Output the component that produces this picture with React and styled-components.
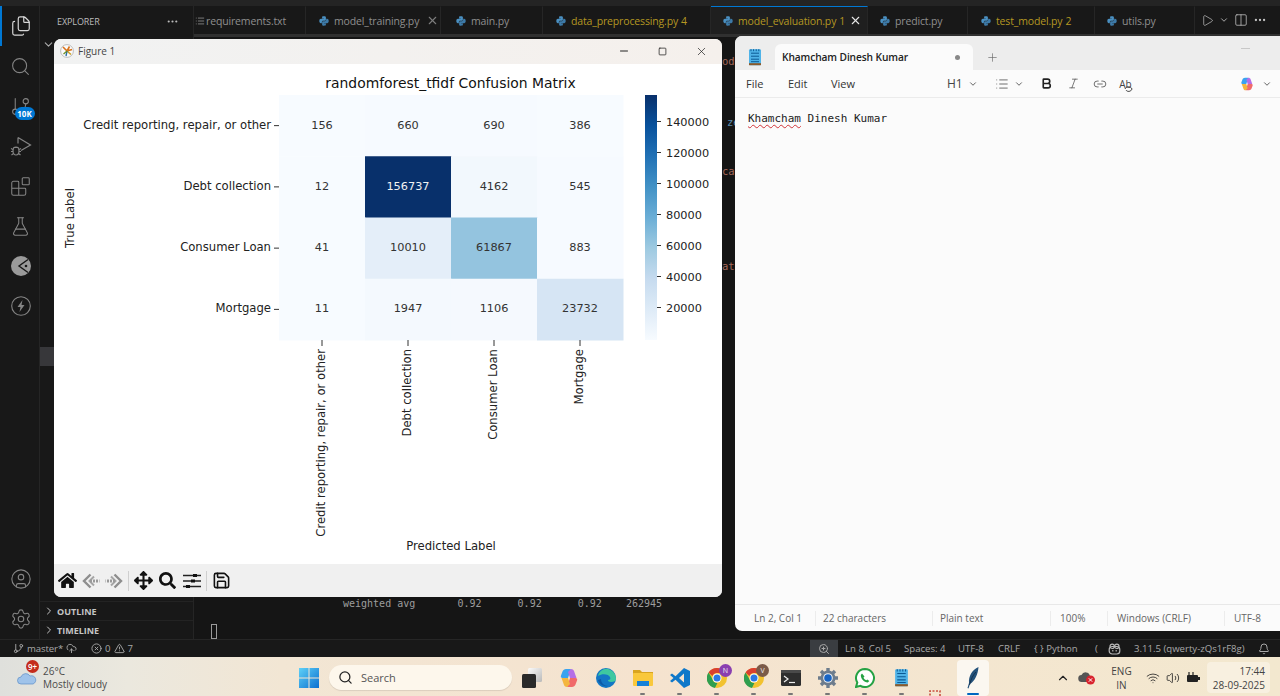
import React from 'react';
import styled, { createGlobalStyle } from 'styled-components';
import {
  Files, Search, Play, ChevronDown, ChevronRight, ChevronUp, Columns2, MoreHorizontal, X, Minus, Square,
  Plus, List, Bold, Italic, Link2, FlaskConical, CircleUser, Settings, GitBranch, CircleX, TriangleAlert,
  CloudUpload, ZoomIn, Bell, Wifi, Volume2, Save, Blocks,
} from 'lucide-react';
import { FaHome, FaSearch, FaArrowsAlt } from 'react-icons/fa';

const GlobalStyle = createGlobalStyle`
  html, body { margin: 0; padding: 0; height: 696px; overflow: hidden; background: #151515; }
  body { font-family: "Open Sans", "Liberation Sans", sans-serif; }
  * { box-sizing: border-box; }
`;

const Desktop = styled.div`
  position: relative;
  width: 1280px;
  height: 696px;
  display: flex;
  flex-direction: column;
  overflow: hidden;
`;

const Workbench = styled.div`
  flex: 1;
  display: flex;
  min-height: 0;
  border-top: 6px solid #242424;
`;

const ActivityBar = styled.nav`
  width: 40px;
  flex: none;
  background: #181818;
  border-right: 1px solid #252525;
  display: flex;
  flex-direction: column;
  align-items: center;
  color: #8b8b8b;
  position: relative;
`;

const ActivityIcon = styled.div`
  width: 40px;
  height: 40px;
  display: flex;
  align-items: center;
  justify-content: center;
  position: relative;
  color: ${p => (p.$active ? '#d7d7d7' : '#858585')};
  border-left: 2px solid ${p => (p.$active ? '#0078d4' : 'transparent')};
`;

const Badge = styled.span`
  position: absolute;
  left: 13px;
  top: 21px;
  width: 20px;
  height: 13px;
  border-radius: 7px;
  background: #0078d4;
  color: #fff;
  font-size: 8px;
  font-weight: 700;
  line-height: 13px;
  text-align: center;
`;

const ActivitySpacer = styled.div`
  flex: 1;
`;

const Sidebar = styled.aside`
  width: 154px;
  flex: none;
  background: #181818;
  border-right: 1px solid #252525;
  display: flex;
  flex-direction: column;
`;

const SidebarHead = styled.div`
  height: 28px;
  display: flex;
  align-items: center;
  justify-content: space-between;
  padding: 2px 14px 0 17px;
  color: #bbb;
  font-size: 9px;
  letter-spacing: -0.1px;
`;

const TreeChevron = styled.div`
  height: 20px;
  padding-left: 2px;
  color: #aaa;
  display: flex;
  align-items: center;
`;

const SelectedRow = styled.div`
  height: 19px;
  margin-top: 293px;
  background: #37373a;
`;

const SideSpacer = styled.div`
  flex: 1;
`;

const SectionRow = styled.div`
  height: 19px;
  display: flex;
  align-items: center;
  gap: 2px;
  padding-left: 3px;
  color: #c4c4c4;
  font-size: 9px;
  font-weight: 700;
  border-top: 1px solid #232323;
`;

const MainColumn = styled.div`
  flex: 1;
  min-width: 0;
  display: flex;
  flex-direction: column;
`;

const TabBar = styled.div`
  height: 31px;
  flex: none;
  display: flex;
  background: #181818;
  border-bottom: 3px solid #303030;
`;

const Tab = styled.div`
  width: ${p => p.$w}px;
  flex: none;
  display: flex;
  align-items: center;
  gap: ${p => p.$gap}px;
  padding-left: ${p => p.$pad}px;
  font-size: 10.5px;
  letter-spacing: -0.15px;
  white-space: nowrap;
  color: ${p => (p.$warn ? '#b49722' : '#8f8f8f')};
  background: ${p => (p.$active ? '#1f1f1f' : '#181818')};
  border-right: 1px solid #262626;
  border-top: 1px solid ${p => (p.$active ? '#0078d4' : 'transparent')};
`;

const TabCount = styled.span`
  margin: 0 -3px 0 -2px;
`;

const TabClose = styled(X)`
  margin-left: 2px;
  color: ${p => (p.$light ? '#e6e6e6' : '#7d7d7d')};
`;

const TabActions = styled.div`
  flex: 1;
  display: flex;
  align-items: center;
  gap: 5px;
  padding-left: 6px;
  color: #c4c4c4;
`;

const EditorPane = styled.div`
  flex: 1;
  min-height: 0;
  display: flex;
  flex-direction: column;
  background: #151515;
  font-family: "DejaVu Sans Mono", monospace;
  font-size: 10.5px;
  white-space: pre;
`;

const CodeLine = styled.div`
  height: 14px;
  line-height: 14px;
  margin-top: ${p => p.$top}px;
  padding-left: ${p => p.$left}px;
  color: ${p => p.$color};
`;

const TerminalLine = styled.div`
  margin-top: auto;
  height: 14px;
  line-height: 14px;
  padding-left: 149px;
  font-size: 10px;
  color: #9d9d9d;
`;

const TerminalCursor = styled.div`
  width: 6px;
  height: 15px;
  margin: 13px 0 0 17px;
  border: 1px solid #9a9a9a;
`;

const StatusBar = styled.footer`
  height: 18px;
  flex: none;
  display: flex;
  align-items: center;
  background: #181818;
  border-top: 1px solid #262626;
  color: #a8a8a8;
  font-size: 9.6px;
  white-space: nowrap;
`;

const StatusLeft = styled.div`
  flex: 1;
  display: flex;
  align-items: center;
  gap: 3px;
  padding-left: 13px;
  letter-spacing: -0.1px;
`;

const StatusGap = styled.span`
  width: 8px;
`;

const ZoomBox = styled.div`
  width: 28px;
  height: 17px;
  background: #3a3d41;
  display: flex;
  align-items: center;
  justify-content: center;
  margin-right: 7px;
`;

const StatusItem = styled.span`
  display: flex;
  align-items: center;
  gap: 4px;
  width: ${p => p.$w}px;
`;

const Taskbar = styled.div`
  height: 39px;
  flex: none;
  display: flex;
  align-items: center;
  padding-top: 2px;
  background: linear-gradient(90deg, #dfe0dc 0%, #ebe8de 10%, #f2e6d4 22%, #f5e3cf 50%, #f4e6d0 75%, #f3e8cf 100%);
  color: #333;
  position: relative;
`;

const Weather = styled.div`
  width: 290px;
  flex: none;
  display: flex;
  align-items: center;
  gap: 6px;
  padding-left: 17px;
  position: relative;
`;

const WeatherBadge = styled.span`
  position: absolute;
  left: 26px;
  top: -5px;
  width: 13px;
  height: 13px;
  border-radius: 50%;
  background: #c42b1c;
  color: #fff;
  font-size: 8px;
  font-weight: 600;
  line-height: 13px;
  text-align: center;
`;

const WeatherText = styled.div`
  font-size: 10px;
  line-height: 13px;
  color: #4b4b4b;
`;

const TaskSlot = styled.div`
  width: ${p => p.$w || 37}px;
  height: 36px;
  flex: none;
  display: flex;
  align-items: center;
  justify-content: center;
  position: relative;
  ${p => p.$active && 'background: #fbf7f0; border-radius: 4px;'}
  ${p => p.$open && `
    &::after {
      content: '';
      position: absolute;
      bottom: 1px;
      left: 50%;
      width: ${p.$active ? 12 : 5}px;
      height: 2px;
      margin-left: ${p.$active ? -6 : -2.5}px;
      border-radius: 1px;
      background: ${p.$active ? '#0067c0' : '#777'};
    }
  `}
`;

const ClippedIcon = styled.div`
  position: absolute;
  left: 9px;
  top: 30px;
  line-height: 0;
`;

const SearchBox = styled.div`
  width: 183px;
  height: 25px;
  margin: 0 1px 0 2px;
  flex: none;
  display: flex;
  align-items: center;
  gap: 8px;
  padding-left: 9px;
  border-radius: 13px;
  background: #fdf7ec;
  box-shadow: 0 1px 1px rgba(0, 0, 0, 0.1);
  color: #555;
  font-size: 11px;
`;

const SmallBadge = styled.span`
  position: absolute;
  right: 3px;
  top: 4px;
  width: 13px;
  height: 13px;
  border-radius: 50%;
  background: ${p => p.$color};
  color: #eee;
  font-size: 7px;
  line-height: 13px;
  text-align: center;
`;

const Tray = styled.div`
  flex: 1;
  display: flex;
  align-items: center;
  padding-left: 65px;
  color: #222;
`;

const TrayIcon = styled.div`
  width: ${p => p.$w}px;
  display: flex;
  justify-content: center;
  flex: none;
`;

const Lang = styled.div`
  width: 33px;
  margin: 0 5px 0 3px;
  text-align: center;
  font-size: 10px;
  line-height: 14px;
  color: #444;
`;

const Clock = styled.div`
  width: 63px;
  height: 31px;
  margin-left: 6px;
  padding: 2px 5px 0 0;
  text-align: right;
  background: #f8f0e0;
  border-radius: 4px;
  font-size: 10px;
  line-height: 14px;
  color: #444;
`;

const FigureWindow = styled.section`
  position: absolute;
  left: 54px;
  top: 39px;
  width: 668px;
  height: 558px;
  display: flex;
  flex-direction: column;
  background: #fff;
  border-radius: 7px;
  overflow: hidden;
`;

const FigureTitle = styled.div`
  height: 25px;
  flex: none;
  display: flex;
  align-items: center;
  gap: 4px;
  padding: 0 1px 1px 6px;
  background: linear-gradient(90deg, #f1f2f2, #f5f0ec);
  color: #444;
  font-size: 10px;
`;

const WindowButtons = styled.div`
  margin-left: auto;
  display: flex;
  align-items: center;
  color: #222;
`;

const WindowButton = styled.div`
  width: 39px;
  display: flex;
  justify-content: center;
`;

const Canvas = styled.svg`
  flex: 1;
  display: block;
  min-height: 0;
  font-family: "DejaVu Sans", sans-serif;
`;

const FigureToolbar = styled.div`
  height: 33px;
  flex: none;
  display: flex;
  align-items: center;
  padding-left: 2px;
  background: #f0f0f0;
  color: #111;
`;

const ToolButton = styled.div`
  width: ${p => p.$w || 23}px;
  display: flex;
  justify-content: center;
`;

const ToolSep = styled.div`
  width: 1px;
  height: 20px;
  margin: 0 ${p => p.$gap || 5}px;
  background: #cfcfcf;
`;

const NotepadWindow = styled.section`
  position: absolute;
  left: 735px;
  top: 36px;
  width: 545px;
  height: 595px;
  display: flex;
  flex-direction: column;
  background: #fbfbfb;
  border-radius: 7px 0 0 7px;
  overflow: hidden;
`;

const NotepadTabs = styled.div`
  height: 34px;
  flex: none;
  display: flex;
  align-items: flex-end;
  background: #ededed;
  padding-left: 12px;
`;

const NoteIconSlot = styled.div`
  width: 28px;
  height: 26px;
  flex: none;
  display: flex;
  align-items: center;
`;

const NoteTab = styled.div`
  width: 198px;
  height: 26px;
  display: flex;
  align-items: center;
  justify-content: space-between;
  padding: 0 13px 0 7px;
  background: #fbfbfb;
  border-radius: 6px 6px 0 0;
  color: #222;
  font-size: 10.2px;
  font-weight: 600;
  letter-spacing: -0.1px;
`;

const UnsavedDot = styled.span`
  width: 5px;
  height: 5px;
  border-radius: 50%;
  background: #888;
`;

const NewTab = styled.div`
  height: 26px;
  width: 38px;
  display: flex;
  align-items: center;
  justify-content: center;
  color: #666;
`;

const Minimize = styled.div`
  margin: 0 30px 21px auto;
  width: 9px;
  height: 1px;
  background: #c8c8c8;
`;

const NoteMenu = styled.div`
  height: 28px;
  flex: none;
  display: flex;
  align-items: center;
  padding-left: 11px;
  border-bottom: 1px solid #ebebeb;
  color: #333;
  font-size: 11px;
  position: relative;
`;

const MenuItem = styled.span`
  width: ${p => p.$w}px;
  flex: none;
`;

const NoteTool = styled.div`
  width: ${p => p.$w}px;
  flex: none;
  display: flex;
  align-items: center;
  justify-content: ${p => p.$align || 'center'};
  gap: 5px;
  color: #444;
`;

const HeadingLabel = styled.span`
  font-size: 12px;
`;

const RewriteLabel = styled.span`
  font-size: 10px;
  position: relative;
  line-height: 12px;
`;

const RewriteSwirl = styled.svg`
  position: absolute;
  left: 5px;
  top: 6px;
`;

const NoteBody = styled.div`
  flex: 1;
  padding: 14px 13px;
  font-family: "DejaVu Sans Mono", monospace;
  font-size: 11px;
  line-height: 14px;
  color: #222;
  white-space: pre;
`;

const Misspelled = styled.span`
  text-decoration: underline wavy #d13438 1px;
  text-underline-offset: 2px;
`;

const NoteStatus = styled.div`
  height: 27px;
  flex: none;
  display: flex;
  align-items: center;
  border-top: 1px solid #e8e8e8;
  color: #666;
  font-size: 10px;
`;

const NoteCell = styled.div`
  width: ${p => p.$w}px;
  height: 15px;
  line-height: 15px;
  flex: none;
  padding-left: ${p => p.$pad || 7}px;
  border-left: ${p => (p.$first ? 'none' : '1px solid #ececec')};
`;

// python logo used on the editor tabs
const PyIcon = () => (
  <svg width="10" height="10" viewBox="0 0 16 16">
    <path d="M5 1.500C5 .8 6 .5 8 .5s3 .5 3 1.500v4c0 1-.7 1.700-1.700 1.700H6.700C5.500 7.700 4.500 8.700 4.500 10v1.500H3c-1.500 0-2.500-1.300-2.500-3.500S1.500 4.500 3 4.500h5V4H5z" fill="#4a90c2" />
    <path d="M11 14.500c0 .7-1 1-3 1s-3-.5-3-1.500v-4c0-1 .7-1.700 1.700-1.700h2.600c1.200 0 2.200-1 2.200-2.300V4.500H13c1.500 0 2.500 1.300 2.500 3.500s-1 3.500-2.500 3.500H8v.5h3z" fill="#3d7aa8" />
  </svg>
);

const DebugIcon = () => (
  <svg width="22" height="22" viewBox="0 0 22 22" fill="none" stroke="currentColor" strokeWidth="1.200">
    <path d="M8 2.500v6M8 2.500 20.500 10 11 15.500" />
    <ellipse cx="6" cy="16" rx="3" ry="4" />
    <path d="M1 13.500l2 1M1 16.500h2M1.500 20l2-1.500M11 13.500l-2 1M11 16.500H9M10.500 20l-2-1.500M3.500 12.500h5" />
  </svg>
);

const ExtensionCircle = () => (
  <svg width="20" height="20" viewBox="0 0 20 20">
    <circle cx="10" cy="10" r="10" fill="#9a9a9a" />
    <path d="M17 3.500 8 10l9 6.500" fill="none" stroke="#181818" strokeWidth="1.400" />
    <circle cx="15" cy="10" r="1.300" fill="#181818" />
  </svg>
);

const BoltCircle = () => (
  <svg width="20" height="20" viewBox="0 0 20 20">
    <circle cx="10" cy="10" r="9.300" fill="none" stroke="#858585" strokeWidth="1.100" />
    <path d="M11.500 4 6.500 11h3l-1 5 5-7h-3z" fill="#858585" />
  </svg>
);

const MplLogo = () => (
  <svg width="14" height="14" viewBox="0 0 14 14">
    <circle cx="7" cy="7" r="6.400" fill="#fafafa" stroke="#999" strokeWidth="0.600" />
    <path d="M7 7 3 3M7 7l5-1.500M7 7l2.500-4.500" stroke="#d9731c" strokeWidth="1.600" />
    <path d="M7 7l4 3.500" stroke="#c9a227" strokeWidth="1.600" />
    <path d="M7 7l-1 5" stroke="#2b6ea8" strokeWidth="1.400" />
    <path d="M7 7 3.500 10" stroke="#6b8e23" strokeWidth="1.200" />
  </svg>
);

const BackArrow = ({ flip }) => (
  <svg width="18" height="16" viewBox="0 0 18 16" style={flip ? { transform: 'scaleX(-1)' } : undefined}>
    <path d="M8.500 1.500 2 8l6.500 6.500" fill="none" stroke="#8e8e8e" strokeWidth="2.400" />
    <path d="M12 3.500 7.500 8l4.500 4.500" fill="none" stroke="#a5a5a5" strokeWidth="2" />
    <path d="M8 8h9.500" stroke="#999" strokeWidth="3" strokeDasharray="2 1" />
  </svg>
);

const SlidersIcon = () => (
  <svg width="18" height="16" viewBox="0 0 18 16">
    <path d="M0 2.500h18M0 8h18M0 13.500h18" stroke="#222" strokeWidth="1.300" />
    <rect x="10" y="1" width="4" height="3" fill="#111" />
    <rect x="8" y="6.500" width="4" height="3" fill="#111" />
    <rect x="3" y="12" width="4" height="3" fill="#111" />
  </svg>
);

const NotepadIcon = ({ size = 16 }) => (
  <svg width={size} height={size * 1.150} viewBox="0 0 16 18">
    <rect x="2" y="1" width="12" height="16" rx="1.200" fill="#4fb3e8" />
    <rect x="2" y="15" width="12" height="2" fill="#8a5a2b" />
    <path d="M4 5h8M4 8h8M4 11h8M4 13.500h8" stroke="#0b5a94" strokeWidth="1" />
    <path d="M4 1v2M6.600 1v2M9.200 1v2M11.800 1v2" stroke="#0b5a94" strokeWidth="1" />
  </svg>
);

const CopilotIcon = ({ size = 20 }) => (
  <svg width={size} height={size} viewBox="0 0 20 20">
    <path d="M7 1h5l-3 9H3.500C2 10 1.500 9 2 7.500l1.500-4C4 2 5.500 1 7 1z" fill="#3aa3f0" />
    <path d="M13 19H8l3-9h5.500c1.500 0 2 1 1.500 2.500l-1.500 4C16 18 14.500 19 13 19z" fill="#f06a6a" />
    <path d="M12 1c1.500 0 2.600.8 3 2l2.500 7H11L9 4z" fill="#b56ee6" />
    <path d="M8 19c-1.500 0-2.600-.8-3-2l-2.500-7H9l2 6z" fill="#f4b63f" />
  </svg>
);

const WindowsLogo = () => (
  <svg width="20" height="20" viewBox="0 0 20 20">
    <defs>
      <linearGradient id="winGrad" x1="0" y1="0" x2="1" y2="1">
        <stop offset="0" stopColor="#5fd1f7" />
        <stop offset="1" stopColor="#0a6fd0" />
      </linearGradient>
    </defs>
    <path d="M0 0h9.500v9.500H0zM10.500 0H20v9.500h-9.500zM0 10.500h9.500V20H0zM10.500 10.500H20V20h-9.500z" fill="url(#winGrad)" />
  </svg>
);

const TaskViewIcon = () => (
  <svg width="20" height="20" viewBox="0 0 20 20">
    <defs>
      <linearGradient id="taskGrad" x1="0" y1="0" x2="1" y2="1">
        <stop offset="0" stopColor="#fbfbfb" />
        <stop offset="1" stopColor="#b9b9b9" />
      </linearGradient>
    </defs>
    <rect x="6" y="0" width="14" height="14" rx="1.500" fill="url(#taskGrad)" />
    <rect x="0" y="6" width="14" height="14" rx="1.500" fill="#2a2a2a" />
  </svg>
);

const EdgeIcon = () => (
  <svg width="20" height="20" viewBox="0 0 20 20">
    <circle cx="10" cy="10" r="10" fill="#1477c4" />
    <path d="M2 8C3 3 8 0 12 1c4 1 8 4 8 10 0 2-2 3-5 3-2 0-3-1-3-2 2 0 3-1 2-3-1-3-8-4-12-1z" fill="#3ec8a0" />
    <path d="M5 11c0 4 3 7 7 7-4 1-9-2-10-6z" fill="#0d5aa7" />
  </svg>
);

const FolderIcon = () => (
  <svg width="20" height="20" viewBox="0 0 20 20">
    <path d="M0 2h7l2 2h11v2H0z" fill="#d9a520" />
    <rect x="0" y="5" width="20" height="13" rx="1" fill="#f9c83c" />
    <rect x="4" y="13" width="12" height="5" fill="#1480d8" />
  </svg>
);

const VsCodeIcon = () => (
  <svg width="20" height="20" viewBox="0 0 20 20">
    <path d="M14 0 20 3v14l-6 3L5.500 11.800 2 14.500 0 13l3.500-3L0 7l2-1.500 3.500 2.700z" fill="#0f78c9" />
    <path d="M14 5.500 9 10l5 4.500z" fill="#f5e3cf" />
  </svg>
);

const ChromeIcon = () => (
  <svg width="20" height="20" viewBox="0 0 20 20">
    <circle cx="10" cy="10" r="10" fill="#f2c230" />
    <path d="M10 0a10 10 0 0 1 8.700 5H10a5 5 0 0 0-4.600 3L1.500 4.500A10 10 0 0 1 10 0z" fill="#d9402f" />
    <path d="M1.500 4.500 5.400 11a5 5 0 0 0 5 4L8 20A10 10 0 0 1 1.500 4.500z" fill="#2f9e4f" />
    <circle cx="10" cy="10" r="4.500" fill="#fff" />
    <circle cx="10" cy="10" r="3.500" fill="#2b78e4" />
  </svg>
);

const TerminalIcon = () => (
  <svg width="20" height="16" viewBox="0 0 20 16">
    <rect width="20" height="16" rx="1.500" fill="#2e2e2e" />
    <rect width="20" height="3" fill="#4a4a4a" />
    <path d="m3 6 4 3-4 3" fill="none" stroke="#eee" strokeWidth="1.200" />
    <path d="M8 12.500h6" stroke="#eee" strokeWidth="1.200" />
  </svg>
);

const GearIcon = () => (
  <svg width="20" height="20" viewBox="0 0 20 20">
    <circle cx="10" cy="10" r="7.500" fill="#6d7c8c" />
    <path d="M10 0v20M0 10h20M3 3l14 14M17 3 3 17" stroke="#6d7c8c" strokeWidth="3.400" />
    <circle cx="10" cy="10" r="4.800" fill="#f0f2f4" />
    <circle cx="10" cy="10" r="3.800" fill="#1764c4" />
  </svg>
);

const WhatsAppIcon = () => (
  <svg width="20" height="20" viewBox="0 0 20 20">
    <path d="M10 1a9 9 0 0 0-7.700 13.600L1 19l4.500-1.200A9 9 0 1 0 10 1z" fill="#fff" stroke="#25a244" strokeWidth="2" />
    <path d="M7 5.500 5.800 7c0 4 3 7 7 7.500l1.500-1.500-2-1.500-1 .8c-1.300-.5-2.300-1.500-2.800-2.800l1-1z" fill="#25a244" />
  </svg>
);

const QuillIcon = () => (
  <svg width="14" height="22" viewBox="0 0 14 22">
    <path d="M12.500 0C6 3 2.500 9 3 16l-1.500 5 1 .4L4 17c5-3 8-10 8.500-17z" fill="#24527a" />
    <path d="M10 5C7 8 5 12 3.500 18" stroke="#0e2a45" strokeWidth="0.800" fill="none" />
  </svg>
);

const SnipIcon = () => (
  <svg width="18" height="10" viewBox="0 0 18 10">
    <path d="M1 9V1h10v8" fill="none" stroke="#c9503f" strokeWidth="1.600" strokeDasharray="2 1.500" />
    <rect x="12" y="6" width="5" height="4" fill="#3f8fd6" />
  </svg>
);

const OneDriveAlert = () => (
  <svg width="18" height="14" viewBox="0 0 18 14">
    <path d="M4 11a3.500 3.500 0 0 1-.5-7A4.500 4.500 0 0 1 12 5a3 3 0 0 1 1 6z" fill="#555" />
    <circle cx="12.500" cy="9" r="4.500" fill="#d9232e" />
    <path d="m10.800 7.300 3.400 3.400m0-3.400-3.400 3.400" stroke="#fff" strokeWidth="1" />
  </svg>
);

const BatteryPlug = () => (
  <svg width="15" height="12" viewBox="0 0 15 12">
    <rect x="2" y="3" width="11" height="7" rx="1" fill="#222" />
    <rect x="13" y="5" width="2" height="3" fill="#222" />
    <path d="M4 0v3M8 0v3" stroke="#222" strokeWidth="1.200" />
  </svg>
);

const WeatherIcon = () => (
  <svg width="20" height="16" viewBox="0 0 20 16">
    <path d="M4 14a3.500 3.500 0 0 1 0-7 5 5 0 0 1 9-1 4 4 0 0 1 3 8z" fill="#9fc3ea" stroke="#5d8ec7" strokeWidth="0.700" />
  </svg>
);

const CopilotStatus = () => (
  <svg width="13" height="12" viewBox="0 0 13 12" fill="none" stroke="#b5b5b5" strokeWidth="1.200">
    <rect x="1.200" y="3.500" width="10.600" height="7.500" rx="3" />
    <circle cx="4.200" cy="3.300" r="2.200" />
    <circle cx="8.800" cy="3.300" r="2.200" />
    <path d="M4.800 7v1.500M8.200 7v1.500" />
  </svg>
);

const TABS = [
  { name: 'requirements.txt', w: 112, pad: 1, gap: 1, plain: true },
  { name: 'model_training.py', w: 135, pad: 13, close: true },
  { name: 'main.py', w: 102, pad: 15 },
  { name: 'data_preprocessing.py', w: 168, pad: 13, count: 4, warn: true },
  { name: 'model_evaluation.py', w: 157, pad: 12, count: 1, warn: true, active: true, close: true },
  { name: 'predict.py', w: 100, pad: 12 },
  { name: 'test_model.py', w: 127, pad: 13, count: 2, warn: true },
  { name: 'utils.py', w: 100, pad: 12 },
];

const ROW_LABELS = ['Credit reporting, repair, or other', 'Debt collection', 'Consumer Loan', 'Mortgage'];
const MATRIX = [
  [156, 660, 690, 386],
  [12, 156737, 4162, 545],
  [41, 10010, 61867, 883],
  [11, 1947, 1106, 23732],
];
const CELL_COLORS = [
  ['#f7fbff', '#f6faff', '#f6faff', '#f7fbff'],
  ['#f7fbff', '#08306b', '#f2f8fd', '#f6faff'],
  ['#f7fbff', '#e4eef9', '#94c4df', '#f6faff'],
  ['#f7fbff', '#f4f9fe', '#f5f9fe', '#d6e5f4'],
];
const BAR_TICKS = [140000, 120000, 100000, 80000, 60000, 40000, 20000];

const CELL_W = 86;
const CELL_H = 61.25;
const MAP_X = 279;
const MAP_Y = 95;

const ConfusionChart = () => (
  <Canvas viewBox="54 64 668 500" width="668" height="500">
    <defs>
      <linearGradient id="blues" x1="0" y1="0" x2="0" y2="1">
        <stop offset="0" stopColor="#08306b" />
        <stop offset="0.125" stopColor="#08519c" />
        <stop offset="0.25" stopColor="#2171b5" />
        <stop offset="0.375" stopColor="#4292c6" />
        <stop offset="0.5" stopColor="#6baed6" />
        <stop offset="0.625" stopColor="#9ecae1" />
        <stop offset="0.75" stopColor="#c6dbef" />
        <stop offset="0.875" stopColor="#deebf7" />
        <stop offset="1" stopColor="#f7fbff" />
      </linearGradient>
    </defs>
    <text x="450.500" y="88" fontSize="13.900" textAnchor="middle" fill="#111">randomforest_tfidf Confusion Matrix</text>
    {MATRIX.map((row, r) =>
      row.map((value, c) => (
        <g key={`${r}-${c}`}>
          <rect x={MAP_X + c * CELL_W} y={MAP_Y + r * CELL_H} width={CELL_W + 0.5} height={CELL_H + 0.5} fill={CELL_COLORS[r][c]} />
          <text
            x={MAP_X + c * CELL_W + CELL_W / 2}
            y={MAP_Y + r * CELL_H + CELL_H / 2 + 3}
            fontSize="11.300"
            textAnchor="middle"
            fill={value > 100000 ? '#f2f2f2' : '#333'}
          >
            {value}
          </text>
        </g>
      ))
    )}
    {ROW_LABELS.map((label, i) => {
      const y = MAP_Y + i * CELL_H + CELL_H / 2;
      const x = MAP_X + i * CELL_W + CELL_W / 2;
      return (
        <g key={label}>
          <text x="271" y={y + 3} fontSize="11.630" textAnchor="end" fill="#222">{label}</text>
          <path d={`M274 ${y}h5`} stroke="#333" strokeWidth="1" />
          <path d={`M${x} 340v6`} stroke="#333" strokeWidth="1" />
          <text transform={`translate(${x + 3} 349) rotate(-90)`} fontSize="11.630" textAnchor="end" fill="#222">{label}</text>
        </g>
      );
    })}
    <text transform="translate(74 218) rotate(-90)" fontSize="11.630" textAnchor="middle" fill="#222">True Label</text>
    <text x="451" y="550" fontSize="11.630" textAnchor="middle" fill="#222">Predicted Label</text>
    <rect x="645" y={MAP_Y} width="12" height="245" fill="url(#blues)" />
    {BAR_TICKS.map((tick, i) => (
      <g key={tick}>
        <path d={`M657 ${121.5 + i * 31}h4`} stroke="#333" strokeWidth="1" />
        <text x="666" y={125.500 + i * 31} fontSize="11.300" fill="#222">{tick}</text>
      </g>
    ))}
  </Canvas>
);

const App = () => (
  <Desktop>
    <GlobalStyle />
    <Workbench>
      <ActivityBar>
        <ActivityIcon $active><Files size={22} strokeWidth={1.300} /></ActivityIcon>
        <ActivityIcon><Search size={21} strokeWidth={1.200} /></ActivityIcon>
        <ActivityIcon>
          <GitBranch size={21} strokeWidth={1.200} />
          <Badge>10K</Badge>
        </ActivityIcon>
        <ActivityIcon><DebugIcon /></ActivityIcon>
        <ActivityIcon><Blocks size={21} strokeWidth={1.200} /></ActivityIcon>
        <ActivityIcon><FlaskConical size={21} strokeWidth={1.200} /></ActivityIcon>
        <ActivityIcon><ExtensionCircle /></ActivityIcon>
        <ActivityIcon><BoltCircle /></ActivityIcon>
        <ActivitySpacer />
        <ActivityIcon><CircleUser size={22} strokeWidth={1.200} /></ActivityIcon>
        <ActivityIcon><Settings size={22} strokeWidth={1.200} /></ActivityIcon>
      </ActivityBar>
      <Sidebar>
        <SidebarHead>
          <span>EXPLORER</span>
          <MoreHorizontal size={13} />
        </SidebarHead>
        <TreeChevron><ChevronDown size={13} /></TreeChevron>
        <SelectedRow />
        <SideSpacer />
        <SectionRow><ChevronRight size={12} />OUTLINE</SectionRow>
        <SectionRow><ChevronRight size={12} />TIMELINE</SectionRow>
      </Sidebar>
      <MainColumn>
        <TabBar>
          {TABS.map(tab => (
            <Tab key={tab.name} $w={tab.w} $pad={tab.pad} $gap={tab.gap ?? 5} $warn={tab.warn} $active={tab.active}>
              {tab.plain ? <List size={10} /> : <PyIcon />}
              <span>{tab.name}</span>
              {tab.count && <TabCount>{tab.count}</TabCount>}
              {tab.close && <TabClose size={13} $light={tab.active} />}
            </Tab>
          ))}
          <TabActions>
            <Play size={13} strokeWidth={1.300} />
            <ChevronDown size={10} />
            <Columns2 size={14} strokeWidth={1.300} />
            <MoreHorizontal size={14} />
          </TabActions>
        </TabBar>
        <EditorPane>
          <CodeLine $top={17} $left={528} $color="#a5685a">ode</CodeLine>
          <CodeLine $top={47} $left={533} $color="#5d8db0">ze</CodeLine>
          <CodeLine $top={35} $left={528} $color="#a5685a">cat</CodeLine>
          <CodeLine $top={81} $left={528} $color="#a5685a">at:</CodeLine>
          <TerminalLine>{'weighted avg       0.92      0.92      0.92    262945'}</TerminalLine>
          <TerminalCursor />
        </EditorPane>
      </MainColumn>
    </Workbench>

    <StatusBar>
      <StatusLeft>
        <GitBranch size={11} />
        <span>master*</span>
        <CloudUpload size={11} />
        <StatusGap />
        <CircleX size={11} />
        <span>0</span>
        <TriangleAlert size={11} />
        <span>7</span>
      </StatusLeft>
      <ZoomBox><ZoomIn size={12} /></ZoomBox>
      <StatusItem $w={59}>Ln 8, Col 5</StatusItem>
      <StatusItem $w={54}>Spaces: 4</StatusItem>
      <StatusItem $w={40}>UTF-8</StatusItem>
      <StatusItem $w={36}>CRLF</StatusItem>
      <StatusItem $w={61}>{'{ }'} Python</StatusItem>
      <StatusItem $w={13}>(</StatusItem>
      <StatusItem $w={26}><CopilotStatus /></StatusItem>
      <StatusItem $w={124}>3.11.5 (qwerty-zQs1rF8g)</StatusItem>
      <StatusItem $w={22}><Bell size={12} /></StatusItem>
    </StatusBar>

    <Taskbar>
      <Weather>
        <WeatherIcon />
        <WeatherBadge>9+</WeatherBadge>
        <WeatherText>26°C<br />Mostly cloudy</WeatherText>
      </Weather>
      <TaskSlot><WindowsLogo /></TaskSlot>
      <SearchBox>
        <Search size={15} color="#222" />
        <span>Search</span>
      </SearchBox>
      <TaskSlot><TaskViewIcon /></TaskSlot>
      <TaskSlot><CopilotIcon /></TaskSlot>
      <TaskSlot><EdgeIcon /></TaskSlot>
      <TaskSlot $open><FolderIcon /></TaskSlot>
      <TaskSlot $open><VsCodeIcon /></TaskSlot>
      <TaskSlot $open><ChromeIcon /><SmallBadge $color="#8a3fb0">N</SmallBadge></TaskSlot>
      <TaskSlot $open><ChromeIcon /><SmallBadge $color="#7b5a48">V</SmallBadge></TaskSlot>
      <TaskSlot $open><TerminalIcon /></TaskSlot>
      <TaskSlot $open><GearIcon /></TaskSlot>
      <TaskSlot $open><WhatsAppIcon /></TaskSlot>
      <TaskSlot $open><NotepadIcon size={17} /></TaskSlot>
      <TaskSlot $w={37}><ClippedIcon><SnipIcon /></ClippedIcon></TaskSlot>
      <TaskSlot $w={32} $active $open><QuillIcon /></TaskSlot>
      <Tray>
        <TrayIcon $w={18}><ChevronUp size={14} /></TrayIcon>
        <TrayIcon $w={30}><OneDriveAlert /></TrayIcon>
        <Lang>ENG<br />IN</Lang>
        <TrayIcon $w={20}><Wifi size={14} strokeWidth={1.400} /></TrayIcon>
        <TrayIcon $w={20}><Volume2 size={14} strokeWidth={1.400} /></TrayIcon>
        <TrayIcon $w={18}><BatteryPlug /></TrayIcon>
        <Clock>17:44<br />28-09-2025</Clock>
      </Tray>
    </Taskbar>

    <FigureWindow>
      <FigureTitle>
        <MplLogo />
        <span>Figure 1</span>
        <WindowButtons>
          <WindowButton><Minus size={12} /></WindowButton>
          <WindowButton><Square size={9} /></WindowButton>
          <WindowButton><X size={13} strokeWidth={1.300} /></WindowButton>
        </WindowButtons>
      </FigureTitle>
      <ConfusionChart />
      <FigureToolbar>
        <ToolButton><FaHome size={19} /></ToolButton>
        <ToolButton><BackArrow /></ToolButton>
        <ToolButton><BackArrow flip /></ToolButton>
        <ToolSep $gap={3} />
        <ToolButton><FaArrowsAlt size={19} /></ToolButton>
        <ToolButton $w={25}><FaSearch size={17} /></ToolButton>
        <ToolButton><SlidersIcon /></ToolButton>
        <ToolSep $gap={3} />
        <ToolButton><Save size={19} strokeWidth={2} /></ToolButton>
      </FigureToolbar>
    </FigureWindow>

    <NotepadWindow>
      <NotepadTabs>
        <NoteIconSlot><NotepadIcon /></NoteIconSlot>
        <NoteTab>
          <span>Khamcham Dinesh Kumar</span>
          <UnsavedDot />
        </NoteTab>
        <NewTab><Plus size={13} strokeWidth={1.200} /></NewTab>
        <Minimize />
      </NotepadTabs>
      <NoteMenu>
        <MenuItem $w={42}>File</MenuItem>
        <MenuItem $w={43}>Edit</MenuItem>
        <MenuItem $w={116}>View</MenuItem>
        <NoteTool $w={39} $align="flex-start"><HeadingLabel>H1</HeadingLabel> <ChevronDown size={10} /></NoteTool>
        <NoteTool $w={46}><List size={14} strokeWidth={1.300} /><ChevronDown size={10} /></NoteTool>
        <NoteTool $w={28}><Bold size={13} strokeWidth={3} color="#222" /></NoteTool>
        <NoteTool $w={26}><Italic size={13} strokeWidth={1.300} /></NoteTool>
        <NoteTool $w={27}><Link2 size={14} strokeWidth={1.300} /></NoteTool>
        <NoteTool $w={25}>
          <RewriteLabel>
            Ab
            <RewriteSwirl width="9" height="9" viewBox="0 0 9 9" fill="none" stroke="#444" strokeWidth="1">
              <path d="M1 5c1-3 6-3 7 0-1 3-5 3-6 1" />
            </RewriteSwirl>
          </RewriteLabel>
        </NoteTool>
        <NoteTool $w={116} $align="flex-end"><CopilotIcon size={14} /></NoteTool>
        <NoteTool $w={25}><ChevronDown size={10} /></NoteTool>
      </NoteMenu>
      <NoteBody><Misspelled>Khamcham</Misspelled> Dinesh Kumar</NoteBody>
      <NoteStatus>
        <NoteCell $w={80} $first $pad={19}>Ln 2, Col 1</NoteCell>
        <NoteCell $w={117}>22 characters</NoteCell>
        <NoteCell $w={118}>Plain text</NoteCell>
        <NoteCell $w={57} $pad={9}>100%</NoteCell>
        <NoteCell $w={117} $pad={9}>Windows (CRLF)</NoteCell>
        <NoteCell $w={56} $pad={9}>UTF-8</NoteCell>
      </NoteStatus>
    </NotepadWindow>
  </Desktop>
);

export default App;
